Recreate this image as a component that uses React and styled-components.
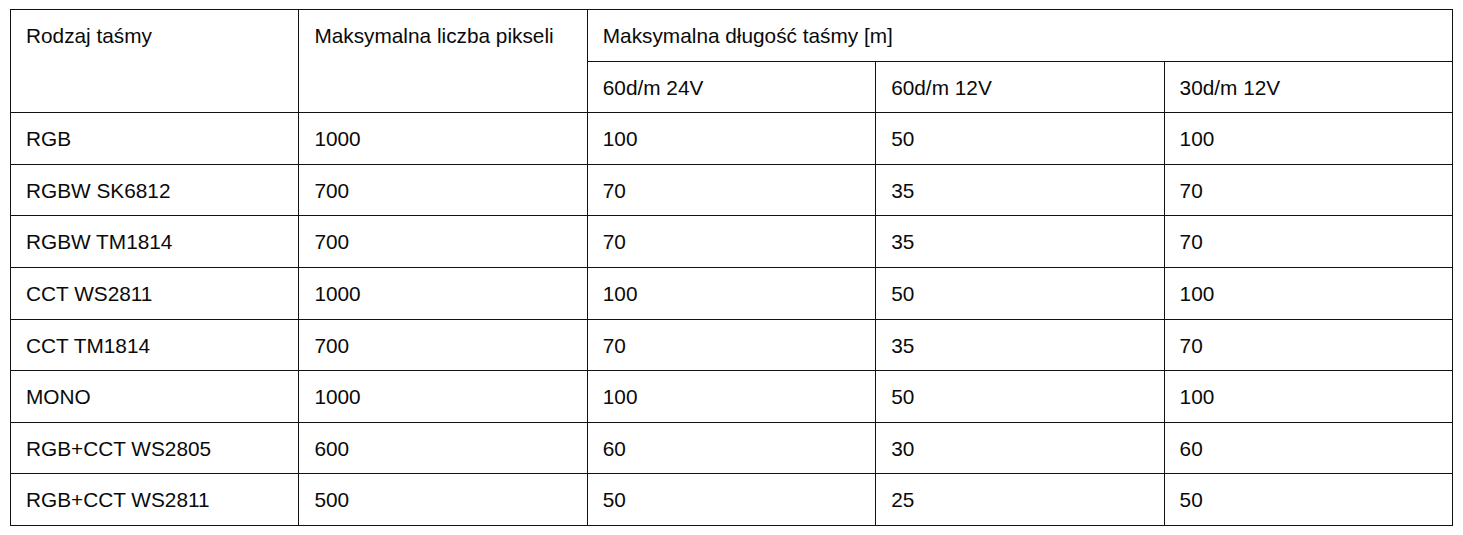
import React from 'react';
import styled, { createGlobalStyle } from 'styled-components';

const GlobalStyle = createGlobalStyle`
  body {
    margin: 0;
    background: #fff;
    font-family: "Liberation Sans", Arial, sans-serif;
  }
`;

const Page = styled.div`
  padding: 9px 0 0 10px;
`;

const Table = styled.table`
  width: 1443px;
  border-collapse: collapse;
  table-layout: fixed;
  color: #0a0a0a;
  font-size: 20.8px;
`;

const Row = styled.tr`
  height: 51.6px;
`;

const Cell = styled.td`
  border: 1px solid #111;
  padding: 14px 15px 0;
  vertical-align: top;
  text-align: left;
  font-weight: normal;
  line-height: 23px;
  white-space: nowrap;
`;

const HeadCell = styled(Cell).attrs({ as: 'th' })``;

const rows = [
  ['RGB', '1000', '100', '50', '100'],
  ['RGBW SK6812', '700', '70', '35', '70'],
  ['RGBW TM1814', '700', '70', '35', '70'],
  ['CCT WS2811', '1000', '100', '50', '100'],
  ['CCT TM1814', '700', '70', '35', '70'],
  ['MONO', '1000', '100', '50', '100'],
  ['RGB+CCT WS2805', '600', '60', '30', '60'],
  ['RGB+CCT WS2811', '500', '50', '25', '50'],
];

export default function App() {
  return (
    <Page>
      <GlobalStyle />
      <Table>
        <colgroup>
          <col /><col /><col /><col /><col />
        </colgroup>
        <thead>
          <Row>
            <HeadCell rowSpan={2}>Rodzaj taśmy</HeadCell>
            <HeadCell rowSpan={2}>Maksymalna liczba pikseli</HeadCell>
            <HeadCell colSpan={3}>Maksymalna długość taśmy [m]</HeadCell>
          </Row>
          <Row>
            <HeadCell>60d/m 24V</HeadCell>
            <HeadCell>60d/m 12V</HeadCell>
            <HeadCell>30d/m 12V</HeadCell>
          </Row>
        </thead>
        <tbody>
          {rows.map((r) => (
            <Row key={r[0]}>
              {r.map((v, i) => (
                <Cell key={i}>{v}</Cell>
              ))}
            </Row>
          ))}
        </tbody>
      </Table>
    </Page>
  );
}
